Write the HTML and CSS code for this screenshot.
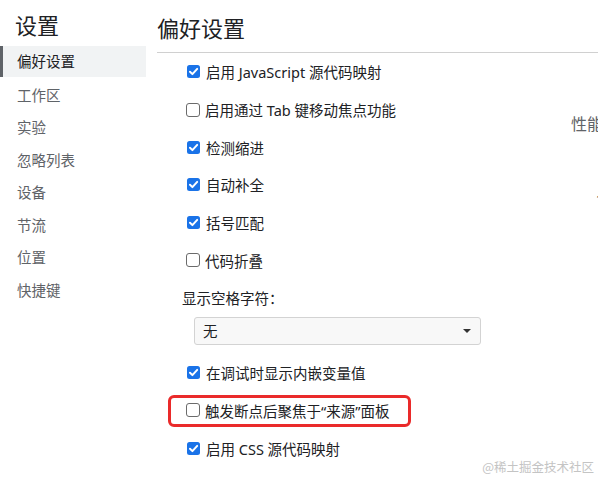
FILE: index.html
```html
<!DOCTYPE html>
<html lang="zh">
<head>
<meta charset="utf-8">
<link rel="stylesheet" href="styles.css">
</head>
<body>
<div class="app">
  <aside class="sidebar">
    <div class="side-title">设置</div>
    <div class="nav-item selected">偏好设置</div>
    <div class="nav-item">工作区</div>
    <div class="nav-item">实验</div>
    <div class="nav-item">忽略列表</div>
    <div class="nav-item">设备</div>
    <div class="nav-item">节流</div>
    <div class="nav-item">位置</div>
    <div class="nav-item">快捷键</div>
  </aside>
  <main class="main">
    <div class="main-title">偏好设置</div>
    <div class="columns">
      <section class="col1">
        <div class="row"><span class="cb checked"><svg viewBox="0 0 13 13" width="13" height="13"><path d="M3 6.8 L5.4 9.1 L10.2 3.9" fill="none" stroke="#fff" stroke-width="2" stroke-linecap="round" stroke-linejoin="round"/></svg></span><span class="lbl">启用 JavaScript 源代码映射</span></div>
        <div class="row"><span class="cb"></span><span class="lbl">启用通过 Tab 键移动焦点功能</span></div>
        <div class="row"><span class="cb checked"><svg viewBox="0 0 13 13" width="13" height="13"><path d="M3 6.8 L5.4 9.1 L10.2 3.9" fill="none" stroke="#fff" stroke-width="2" stroke-linecap="round" stroke-linejoin="round"/></svg></span><span class="lbl">检测缩进</span></div>
        <div class="row"><span class="cb checked"><svg viewBox="0 0 13 13" width="13" height="13"><path d="M3 6.8 L5.4 9.1 L10.2 3.9" fill="none" stroke="#fff" stroke-width="2" stroke-linecap="round" stroke-linejoin="round"/></svg></span><span class="lbl">自动补全</span></div>
        <div class="row"><span class="cb checked"><svg viewBox="0 0 13 13" width="13" height="13"><path d="M3 6.8 L5.4 9.1 L10.2 3.9" fill="none" stroke="#fff" stroke-width="2" stroke-linecap="round" stroke-linejoin="round"/></svg></span><span class="lbl">括号匹配</span></div>
        <div class="row"><span class="cb"></span><span class="lbl">代码折叠</span></div>
        <div class="row label-row"><span class="lbl">显示空格字符：</span></div>
        <div class="select"><span>无</span><span class="arrow"></span></div>
        <div class="row"><span class="cb checked"><svg viewBox="0 0 13 13" width="13" height="13"><path d="M3 6.8 L5.4 9.1 L10.2 3.9" fill="none" stroke="#fff" stroke-width="2" stroke-linecap="round" stroke-linejoin="round"/></svg></span><span class="lbl">在调试时显示内嵌变量值</span></div>
        <div class="row highlight"><span class="cb"></span><span class="lbl">触发断点后聚焦于“来源”面板</span><span class="redbox"></span></div>
        <div class="row"><span class="cb checked"><svg viewBox="0 0 13 13" width="13" height="13"><path d="M3 6.8 L5.4 9.1 L10.2 3.9" fill="none" stroke="#fff" stroke-width="2" stroke-linecap="round" stroke-linejoin="round"/></svg></span><span class="lbl">启用 CSS 源代码映射</span></div>
      </section>
      <section class="col2">
        <div class="col2-title">性能</div>
        <div class="col2-item">1</div>
      </section>
    </div>
  </main>
</div>
<div class="watermark">@稀土掘金技术社区</div>
</body>
</html>
```

FILE: styles.css
```css
html, body {
  margin: 0;
  padding: 0;
  background: #fff;
  overflow: hidden;
  width: 598px;
  height: 479px;
}
body {
  font-family: "Noto Sans", "Noto Sans CJK SC", sans-serif;
  color: #202124;
  position: relative;
}
.app {
  display: flex;
  height: 479px;
}
.sidebar {
  width: 146px;
  flex: none;
}
.side-title {
  height: 46px;
  padding-left: 15px;
  font-size: 22px;
  line-height: 50px;
  color: #202124;
}
.nav-item {
  height: 32.5px;
  line-height: 32.5px;
  padding-left: 17px;
  font-size: 14.5px;
  color: #5f6368;
}
.nav-item.selected {
  background: #f1f3f4;
  color: #202124;
  box-shadow: inset 3px 0 0 #5f6368;
  height: 31px;
  line-height: 31px;
  margin-bottom: 1.5px;
}
.main {
  flex: 1;
  min-width: 0;
  padding-left: 11px;
}
.main-title {
  height: 52px;
  line-height: 56px;
  font-size: 22px;
  border-bottom: 1px solid #d0d0d0;
  color: #202124;
  white-space: nowrap;
}
.columns {
  display: flex;
}
.col1 {
  width: 414px;
  flex: none;
}
.row {
  height: 37.7px;
  display: flex;
  align-items: center;
  padding-left: 30px;
  font-size: 14.5px;
  position: relative;
  white-space: nowrap;
}
.label-row {
  padding-left: 25px;
}
.cb {
  width: 14px;
  height: 14px;
  box-sizing: border-box;
  border: 1.5px solid #6b6b6b;
  border-radius: 3px;
  background: #fff;
  flex: none;
  margin-right: 5px;
  margin-left: -1px;
  display: flex;
}
.cb.checked {
  width: 13px;
  height: 13px;
  margin-left: 0;
  margin-right: 6px;
  border-radius: 2.5px;
  background: #1a73e8;
  border: 0;
}
.select {
  margin-left: 37px;
  width: 287px;
  height: 28px;
  box-sizing: border-box;
  border: 1px solid #d3d3d3;
  border-radius: 3px;
  background: #f8f8f8;
  display: flex;
  align-items: center;
  justify-content: space-between;
  padding: 0 9px 0 8px;
  font-size: 14.5px;
  margin-bottom: 9px;
}
.arrow {
  width: 0;
  height: 0;
  border-left: 4px solid transparent;
  border-right: 4px solid transparent;
  border-top: 4px solid #333;
}
.redbox {
  position: absolute;
  left: 11px;
  top: 3px;
  width: 243px;
  height: 32px;
  box-sizing: border-box;
  border: 3px solid #ea2a2a;
  border-radius: 6px;
}
.col2 {
  flex: none;
  width: 200px;
}
.col2-title {
  margin-top: 58px;
  font-size: 16px;
  color: #5f6368;
  white-space: nowrap;
}
.col2-item {
  margin-top: 56px;
  margin-left: 25px;
  font-size: 12px;
  color: #202124;
}
.watermark {
  position: absolute;
  right: 4px;
  bottom: 3px;
  font-size: 12.5px;
  color: #c4c4c4;
  font-family: "Noto Sans CJK SC", sans-serif;
  white-space: nowrap;
}
```
